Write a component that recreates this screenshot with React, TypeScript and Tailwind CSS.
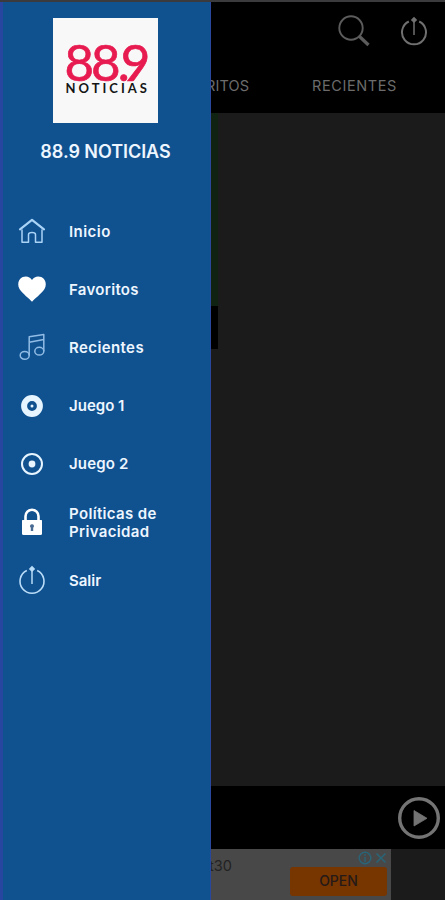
import type { ReactNode } from 'react';

function PowerIcon({ className, dim = false }: { className: string; dim?: boolean }) {
  return (
    <svg viewBox="0 0 28 30" className={className} fill="none" stroke="currentColor">
      <path d="M8.8 5.5A12 12 0 1 0 19.2 5.5" strokeWidth={dim ? 2 : 1.6} />
      <path d="M14 3V19" strokeWidth="1.5" />
      <path d="M14 .8L17.2 4L14 7L10.8 4Z" fill="currentColor" stroke="none" />
    </svg>
  );
}

function HomeIcon() {
  return (
    <svg viewBox="0 0 28 28" className="size-7 text-[#a9d4f7]" fill="none" stroke="currentColor" strokeWidth="1.5" strokeLinejoin="round" strokeLinecap="round">
      <path d="M2 12.4L14 2.9L26 12.4" strokeWidth="2.2" />
      <path d="M4 13V25.2H10.5V17.5Q10.5 15.4 14 15.4Q17.5 15.4 17.5 17.5V25.2H24V13" />
    </svg>
  );
}

function HeartIcon() {
  return (
    <svg viewBox="0 0 28 28" className="size-7 text-white" fill="currentColor">
      <path d="M14 26.8C12 24.4 4.3 18.6 1.5 14.1C-1 9.5.2 4.1 4.7 2C8.4 .7 12 1.6 14 5C16 1.6 19.6 .7 23.3 2C27.8 4.1 29 9.5 26.5 14.1C23.7 18.6 16 24.4 14 26.8Z" />
    </svg>
  );
}

function MusicIcon() {
  return (
    <svg viewBox="0 0 28 28" className="size-7 text-[#91bce5]" fill="none" stroke="currentColor" strokeWidth="1.5" strokeLinejoin="round">
      <ellipse cx="6.7" cy="22.4" rx="4.5" ry="3.9" />
      <ellipse cx="21.3" cy="18.2" rx="4.5" ry="3.9" />
      <path d="M11.2 22.4V3.7L25.8 1.5V18.2M11.2 9.2L25.8 6.6" />
    </svg>
  );
}

function DiscIcon({ filled }: { filled: boolean }) {
  return (
    <svg viewBox="0 0 28 28" className="size-7 text-[#e6f5ff]" fill="none" stroke="currentColor">
      <circle cx="14" cy="14" r={filled ? 7.9 : 10} strokeWidth={filled ? 6 : 2} />
      <circle cx="14" cy="14" r={filled ? 1.5 : 3.4} fill="currentColor" stroke="none" />
    </svg>
  );
}

function LockIcon() {
  return (
    <svg viewBox="0 0 28 28" className="size-7 text-white">
      <path d="M7.5 13V8.3A6.5 6.5 0 0 1 20.5 8.3V13" fill="none" stroke="currentColor" strokeWidth="2.6" />
      <path d="M4.5 12H23.5Q24 12 24 12.5V25.5Q24 27 22.5 27H5.5Q4 27 4 25.5V12.5Q4 12 4.5 12Z" fill="currentColor" />
      <path d="M14 16.2A2 2 0 0 1 15.2 19.8V23H12.8V19.8A2 2 0 0 1 14 16.2Z" fill="#496a91" />
    </svg>
  );
}

function MenuRow({ icon, children }: { icon: ReactNode; children: ReactNode }) {
  return (
    <li className="flex h-[58.2px] items-center gap-[23px] pl-[18px] text-[15px] leading-[18px] font-semibold text-[#edf6ff]">
      {icon}
      <div className="flex flex-col items-start pt-[1px] whitespace-nowrap">{children}</div>
    </li>
  );
}

function Drawer() {
  return (
    <aside className="absolute top-[2px] left-0 flex h-[898px] w-[211px] flex-col border-r border-l-3 border-r-[#29479b] border-l-[#2746a0] bg-[#10518f]">
      <header className="flex h-[200px] flex-col items-center pt-4 pr-[3px]">
        <div className="flex h-[105px] w-[105px] flex-col bg-[#f8f8f8] pt-[25px]">
          <div className="h-[38px] pl-[12px] font-['Lato'] text-[51px] leading-[38px] tracking-[-3px] whitespace-nowrap text-[#e71b50] [-webkit-text-stroke:0.7px_#e71b50]">88<span className="tracking-[-9px]">.</span>9</div>
          <div className="mt-[1px] ml-[13px] font-['Lato'] text-[13px] leading-[12px] font-bold tracking-[3px] text-[#151515]">NOTICIAS</div>
        </div>
        <h1 className="mt-[17px] ml-[1px] text-[18px] leading-6 font-semibold tracking-[-0.05px] text-[#edf6ff]">88.9 NOTICIAS</h1>
      </header>
      <ul className="-ml-[3px]">
        <MenuRow icon={<HomeIcon />}><span className="tracking-[0.45px]">Inicio</span></MenuRow>
        <MenuRow icon={<HeartIcon />}><span className="tracking-[0.3px]">Favoritos</span></MenuRow>
        <MenuRow icon={<MusicIcon />}><span className="tracking-[0.4px]">Recientes</span></MenuRow>
        <MenuRow icon={<DiscIcon filled />}><span>Juego 1</span></MenuRow>
        <MenuRow icon={<DiscIcon filled={false} />}><span className="tracking-[0.15px]">Juego 2</span></MenuRow>
        <MenuRow icon={<LockIcon />}><span className="tracking-[0.35px]">Políticas de</span><span className="tracking-[0.35px]">Privacidad</span></MenuRow>
        <MenuRow icon={<PowerIcon className="h-[30px] w-7 text-[#b9dcf8]" />}><span>Salir</span></MenuRow>
      </ul>
    </aside>
  );
}

export default function App() {
  return (
    <div className="relative flex h-[900px] w-[445px] flex-col overflow-hidden bg-[#1b1b1b] font-['Inter',sans-serif]">
      <div className="h-[2px] shrink-0 bg-[#3b3b3d]" />
      <header className="h-[111px] shrink-0 bg-black text-[#6c6c6c]">
        <div className="flex h-[58px] items-center justify-end gap-[30px] pr-[17px]">
          <svg viewBox="0 0 32 32" className="size-8 text-[#5c5c5c]" fill="none" stroke="currentColor">
            <circle cx="13" cy="13" r="11.7" strokeWidth="1.9" />
            <path d="M21.5 21.5L30.5 30" strokeWidth="3.2" />
          </svg>
          <PowerIcon dim className="h-[30px] w-7 text-[#707070]" />
        </div>
        <nav className="flex h-[52px] items-center justify-end gap-[63px] pr-[48px] text-[14.5px]">
          <span className="tracking-[0.1px]">FAVORITOS</span>
          <span className="tracking-[0.6px]">RECIENTES</span>
        </nav>
      </header>
      <main className="h-[673px] shrink-0 pl-[211px]">
        <div className="h-[193px] w-[7px] bg-[#102211]" />
        <div className="h-[43px] w-[7px] bg-black" />
      </main>
      <section className="flex h-[63px] shrink-0 items-center justify-end bg-black pr-[5px]">
        <svg viewBox="0 0 42 42" className="size-[42px] text-[#747474]">
          <circle cx="21" cy="21" r="19.3" fill="none" stroke="currentColor" strokeWidth="3.4" />
          <path d="M16 13.5L29 21.3L16 29Z" fill="currentColor" stroke="currentColor" strokeWidth=".8" strokeLinejoin="round" />
        </svg>
      </section>
      <footer className="flex h-[51px] shrink-0">
        <div className="flex h-full w-[391px] justify-between bg-[#484848] pl-[209px]">
          <span className="pt-[8px] text-[14.5px] leading-[18px] text-[#222]">t30</span>
          <div className="flex flex-col items-end pr-1">
            <div className="flex h-[18px] items-center gap-[3px] text-[#296477]">
              <svg viewBox="0 0 14 14" className="size-[14px]" fill="none" stroke="currentColor" strokeWidth="1.4">
                <circle cx="7" cy="7" r="5.8" /><path d="M7 6V11M7 3V4.7" />
              </svg>
              <svg viewBox="0 0 12 12" className="size-3" fill="none" stroke="currentColor" strokeWidth="1.5"><path d="M1.5 1.5L10.5 10.5M10.5 1.5L1.5 10.5" /></svg>
            </div>
            <button className="flex h-[29px] w-[97px] items-center justify-center rounded-[3px] bg-[#773500] pb-[2px] text-[14px] font-medium text-[#251a18]">OPEN</button>
          </div>
        </div>
      </footer>
      <Drawer />
    </div>
  );
}
